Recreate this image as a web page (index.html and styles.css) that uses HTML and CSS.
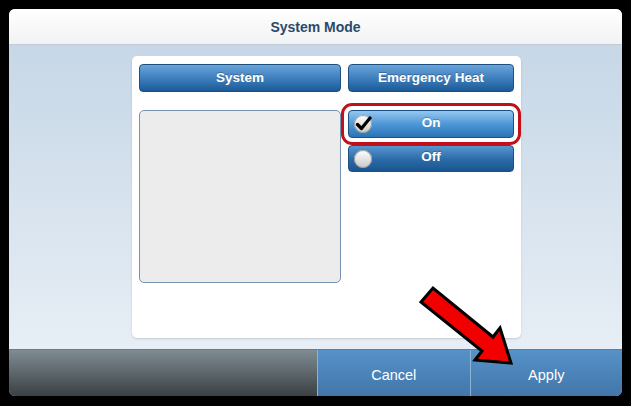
FILE: index.html
```html
<!DOCTYPE html>
<html lang="en">
<head>
  <meta charset="UTF-8">
  <meta name="viewport" content="width=device-width, initial-scale=1.0">
  <title>System Mode</title>
  <link rel="stylesheet" href="styles.css">
</head>
<body>
  <div class="dialog">
    <div class="dialog-title">System Mode</div>

    <div class="dialog-body">
      <div class="card">
        <div class="col">
          <div class="col-head">System</div>
          <div class="mode-list"></div>
        </div>

        <div class="col">
          <div class="col-head">Emergency Heat</div>
          <div class="options">
            <button class="opt selected">
              <span class="radio">
                <svg viewBox="0 0 18 18" width="18" height="18">
                  <path d="M3.5 9.5 L7.5 13.5 L16 3" fill="none" stroke="#000" stroke-width="3.2" stroke-linecap="round" stroke-linejoin="round"/>
                </svg>
              </span>
              On
            </button>
            <button class="opt">
              <span class="radio"></span>
              Off
            </button>
          </div>
        </div>
      </div>
    </div>

    <div class="dialog-footer">
      <div class="footer-fill"></div>
      <button class="footer-btn">Cancel</button>
      <button class="footer-btn">Apply</button>
    </div>
  </div>

  <!-- annotation arrow pointing at Apply -->
  <svg class="callout-arrow" viewBox="0 0 631 406" width="631" height="406">
    <polygon points="421,302 433,288 493,337 500,328 511,363 475,360 482,351" fill="#f20000" stroke="#000" stroke-width="3" stroke-linejoin="miter"/>
  </svg>
</body>
</html>
```

FILE: styles.css
```css
body {
  margin: 0;
  background-color: #000;
  font-family: "Liberation Sans", Arial, sans-serif;
  width: 631px;
  height: 406px;
  overflow: hidden;
  position: relative;
}
.dialog {
  margin: 9px;
  width: 613px;
  height: 387px;
  border-radius: 6px;
  overflow: hidden;
  display: flex;
  flex-direction: column;
  background-color: #dfe8f1;
}
.dialog-title {
  height: 35px;
  line-height: 37px;
  border-bottom: 1px solid #c4cbd2;
  background: linear-gradient(#ffffff, #f1f2f3);
  text-align: center;
  font-size: 14px;
  font-weight: bold;
  color: #2b4a6a;
}
.dialog-body {
  flex: 1;
  background: linear-gradient(#c6d7e7, #e7eef5);
  padding: 11px 0 0 123px;
}
.card {
  width: 389px;
  height: 282px;
  box-sizing: border-box;
  padding: 8px 7px;
  background-color: #fff;
  border-radius: 5px;
  box-shadow: 0 1px 2px rgba(0,0,0,0.15);
  display: grid;
  grid-template-columns: 202px 166px;
  gap: 7px;
  align-items: start;
}
.col-head {
  height: 28px;
  line-height: 25px;
  box-sizing: border-box;
  border: 1px solid #1d4f7f;
  border-radius: 4px;
  background: linear-gradient(#6aa4da, #3a7cbb 55%, #1c5a96);
  color: #fff;
  text-align: center;
  font-size: 13.5px;
  font-weight: bold;
  text-shadow: 0 -1px 0 rgba(0,0,0,0.25);
}
.mode-list {
  margin-top: 18px;
  height: 173px;
  box-sizing: border-box;
  border: 1px solid #7593b2;
  border-radius: 5px;
  background-color: #ececec;
}
.options {
  margin-top: 18px;
  display: flex;
  flex-direction: column;
  gap: 7px;
}
.opt {
  position: relative;
  height: 28px;
  padding: 0 0 4px;
  border: 1px solid #1d4f7f;
  border-radius: 4px;
  background: linear-gradient(#5796d0, #2a6aa8 55%, #1a5590);
  color: #fff;
  font-family: inherit;
  font-size: 13.5px;
  font-weight: bold;
  text-shadow: 0 -1px 0 rgba(0,0,0,0.25);
  cursor: pointer;
}
.opt + .opt {
  height: 27px;
}
.opt.selected {
  background: linear-gradient(#94c8f0, #4f97d6 50%, #2a74b6);
  outline: 3px solid #c0101a;
  outline-offset: 4px;
}
.radio {
  position: absolute;
  left: 5px;
  top: 4px;
  width: 18px;
  height: 18px;
  border-radius: 50%;
  background: linear-gradient(#ffffff, #c9c9c9);
  box-shadow: inset 0 0 0 1px #9a9a9a;
}
.radio svg {
  display: block;
}
.dialog-footer {
  height: 46px;
  display: flex;
  border-top: 1px solid #6e7b82;
}
.footer-fill {
  width: 308px;
  background: linear-gradient(#7f8c93, #3a4043);
}
.footer-btn {
  flex: 1;
  border: none;
  border-left: 1px solid #8fb2d4;
  background: linear-gradient(#5692c8, #4176aa);
  color: #fff;
  font-family: inherit;
  font-size: 14.5px;
  padding: 4px 0 0;
  cursor: pointer;
}
.callout-arrow {
  position: absolute;
  left: 0;
  top: 0;
  pointer-events: none;
}
```
